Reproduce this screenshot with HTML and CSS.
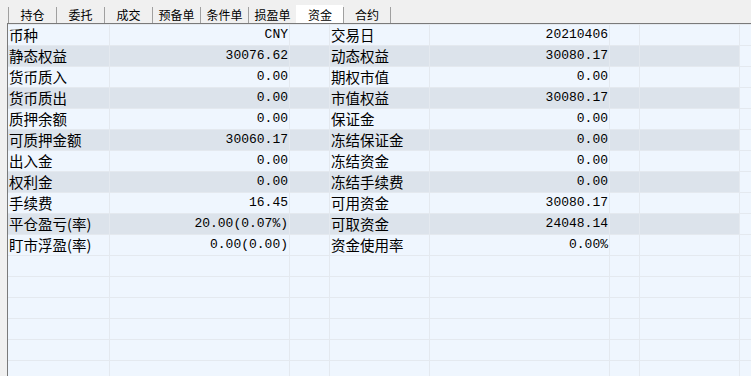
FILE: index.html
```html
<!DOCTYPE html>
<html lang="zh-CN">
<head>
  <meta charset="UTF-8">
  <title>资金</title>
  <link rel="stylesheet" href="styles.css">
</head>
<body>

  <div class="tabs">
    <div class="tab">持仓</div>
    <div class="tab">委托</div>
    <div class="tab">成交</div>
    <div class="tab">预备单</div>
    <div class="tab">条件单</div>
    <div class="tab">损盈单</div>
    <div class="tab active">资金</div>
    <div class="tab last">合约</div>
  </div>

  <div class="grid">
    <div class="row">
      <div class="c c1">币种</div><div class="c c2 num">CNY</div><div class="c c3"></div>
      <div class="c c4">交易日</div><div class="c c5 num">20210406</div><div class="c c6"></div><div class="c c7"></div><div class="c c8"></div>
    </div>
    <div class="row alt">
      <div class="c c1">静态权益</div><div class="c c2 num">30076.62</div><div class="c c3"></div>
      <div class="c c4">动态权益</div><div class="c c5 num">30080.17</div><div class="c c6"></div><div class="c c7"></div><div class="c c8"></div>
    </div>
    <div class="row">
      <div class="c c1">货币质入</div><div class="c c2 num">0.00</div><div class="c c3"></div>
      <div class="c c4">期权市值</div><div class="c c5 num">0.00</div><div class="c c6"></div><div class="c c7"></div><div class="c c8"></div>
    </div>
    <div class="row alt">
      <div class="c c1">货币质出</div><div class="c c2 num">0.00</div><div class="c c3"></div>
      <div class="c c4">市值权益</div><div class="c c5 num">30080.17</div><div class="c c6"></div><div class="c c7"></div><div class="c c8"></div>
    </div>
    <div class="row">
      <div class="c c1">质押余额</div><div class="c c2 num">0.00</div><div class="c c3"></div>
      <div class="c c4">保证金</div><div class="c c5 num">0.00</div><div class="c c6"></div><div class="c c7"></div><div class="c c8"></div>
    </div>
    <div class="row alt">
      <div class="c c1">可质押金额</div><div class="c c2 num">30060.17</div><div class="c c3"></div>
      <div class="c c4">冻结保证金</div><div class="c c5 num">0.00</div><div class="c c6"></div><div class="c c7"></div><div class="c c8"></div>
    </div>
    <div class="row">
      <div class="c c1">出入金</div><div class="c c2 num">0.00</div><div class="c c3"></div>
      <div class="c c4">冻结资金</div><div class="c c5 num">0.00</div><div class="c c6"></div><div class="c c7"></div><div class="c c8"></div>
    </div>
    <div class="row alt">
      <div class="c c1">权利金</div><div class="c c2 num">0.00</div><div class="c c3"></div>
      <div class="c c4">冻结手续费</div><div class="c c5 num">0.00</div><div class="c c6"></div><div class="c c7"></div><div class="c c8"></div>
    </div>
    <div class="row">
      <div class="c c1">手续费</div><div class="c c2 num">16.45</div><div class="c c3"></div>
      <div class="c c4">可用资金</div><div class="c c5 num">30080.17</div><div class="c c6"></div><div class="c c7"></div><div class="c c8"></div>
    </div>
    <div class="row alt">
      <div class="c c1">平仓盈亏(率)</div><div class="c c2 num">20.00(0.07%)</div><div class="c c3"></div>
      <div class="c c4">可取资金</div><div class="c c5 num">24048.14</div><div class="c c6"></div><div class="c c7"></div><div class="c c8"></div>
    </div>
    <div class="row">
      <div class="c c1">盯市浮盈(率)</div><div class="c c2 num">0.00(0.00)</div><div class="c c3"></div>
      <div class="c c4">资金使用率</div><div class="c c5 num">0.00%</div><div class="c c6"></div><div class="c c7"></div><div class="c c8"></div>
    </div>
    <div class="row">
      <div class="c c1"></div><div class="c c2"></div><div class="c c3"></div><div class="c c4"></div><div class="c c5"></div><div class="c c6"></div><div class="c c7"></div><div class="c c8"></div>
    </div>
    <div class="row">
      <div class="c c1"></div><div class="c c2"></div><div class="c c3"></div><div class="c c4"></div><div class="c c5"></div><div class="c c6"></div><div class="c c7"></div><div class="c c8"></div>
    </div>
    <div class="row">
      <div class="c c1"></div><div class="c c2"></div><div class="c c3"></div><div class="c c4"></div><div class="c c5"></div><div class="c c6"></div><div class="c c7"></div><div class="c c8"></div>
    </div>
    <div class="row">
      <div class="c c1"></div><div class="c c2"></div><div class="c c3"></div><div class="c c4"></div><div class="c c5"></div><div class="c c6"></div><div class="c c7"></div><div class="c c8"></div>
    </div>
    <div class="row">
      <div class="c c1"></div><div class="c c2"></div><div class="c c3"></div><div class="c c4"></div><div class="c c5"></div><div class="c c6"></div><div class="c c7"></div><div class="c c8"></div>
    </div>
    <div class="row">
      <div class="c c1"></div><div class="c c2"></div><div class="c c3"></div><div class="c c4"></div><div class="c c5"></div><div class="c c6"></div><div class="c c7"></div><div class="c c8"></div>
    </div>
  </div>

</body>
</html>
```

FILE: styles.css
```css
html, body {
  height: 100%;
}
body {
  margin: 0;
  background: #f0f0f0;
  font-family: "Noto Sans CJK SC", "Noto Sans", sans-serif;
  color: #000;
  overflow: hidden;
}
.tabs {
  display: flex;
  align-items: flex-end;
  height: 23px;
  padding-left: 8px;
  box-sizing: border-box;
}
.tab {
  width: 48px;
  height: 16px;
  line-height: 15px;
  font-size: 12px;
  text-align: center;
  border-left: 1px solid #a0a0a0;
  box-sizing: border-box;
}
.tab.active {
  height: 18px;
  line-height: 19px;
  background: #fff;
  border-left-color: #fff;
  width: 47px;
}
.tab.last {
  border-right: 1px solid #a0a0a0;
  width: 48px;
}
.grid {
  margin-left: 7px;
  border-top: 1px solid #7a7a7a;
  border-left: 1px solid #7a7a7a;
  background: #eff6fe;
  height: calc(100% - 23px);
  box-sizing: border-box;
  overflow: hidden;
}
.row {
  display: flex;
  height: 21px;
  border-top: 1px solid #e4e9ef;
  box-sizing: border-box;
}
.c {
  height: 20px;
  line-height: 19px;
  font-size: 14.5px;
  white-space: nowrap;
  overflow: hidden;
  border-right: 1px solid #e4e9ef;
  box-sizing: border-box;
  padding-left: 1px;
}
.row.alt .c {
  background: #dce3eb;
}
.row.alt .c8 {
  background: #eff6fe;
}
.num {
  font-family: "Liberation Mono", monospace;
  font-size: 13px;
  text-align: right;
  padding-right: 1px;
  line-height: 20px;
}
.c1 { width: 102px; }
.c2 { width: 180px; }
.c3 { width: 40px; }
.c4 { width: 100px; }
.c5 { width: 180px; }
.c6 { width: 30px; }
.c7 { width: 100px; }
.c8 { flex: 1; border-right: none; }
```
